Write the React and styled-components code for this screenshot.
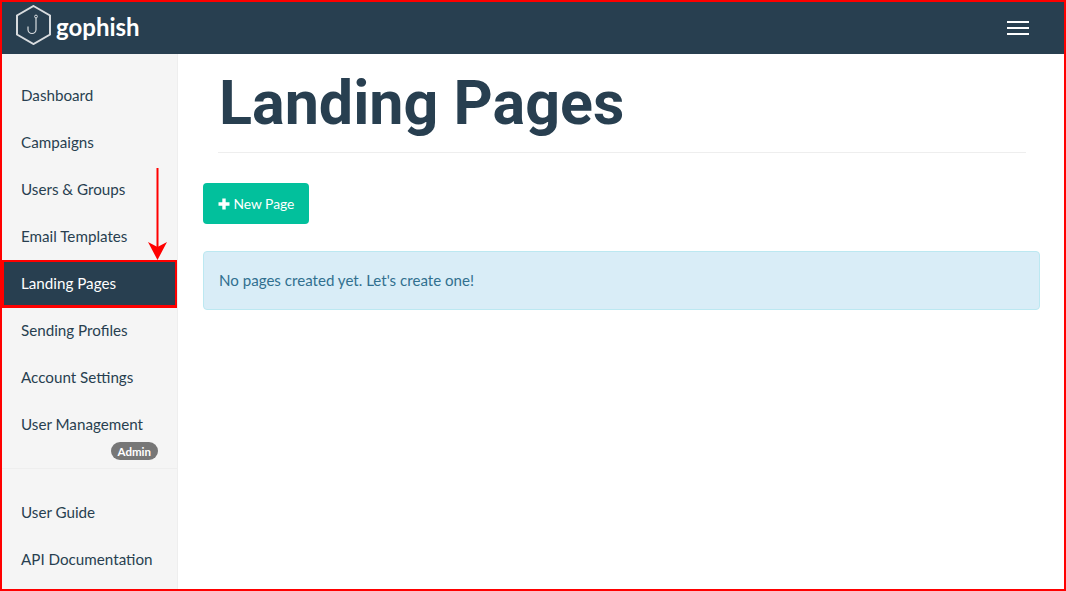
import React from "react";
import styled, { createGlobalStyle } from "styled-components";

const Global = createGlobalStyle`
  html, body { margin: 0; padding: 0; background: #fff; }
  * { box-sizing: border-box; }
  body { font-family: "Lato", "Noto Sans", sans-serif; }
`;

const Frame = styled.div`
  position: relative;
  width: 1066px;
  height: 591px;
  border: 2px solid #ff0000;
  display: flex;
  flex-direction: column;
  overflow: hidden;
  background: #fff;
`;

const TopBar = styled.header`
  flex: 0 0 52px;
  background: #283f50;
  display: flex;
  align-items: center;
  justify-content: space-between;
  padding: 0 35px 0 13px;
`;

const Brand = styled.div`
  display: flex;
  align-items: center;
  gap: 4px;
  margin-top: -6px;
`;

const BrandName = styled.span`
  color: #fff;
  font: 700 24px "Lato", sans-serif;
  margin-top: 3px;
`;

const Burger = styled.div`
  width: 22px;
  display: flex;
  flex-direction: column;
  gap: 4px;
  margin-top: -1px;
`;

const BurgerLine = styled.span`
  display: block;
  height: 2px;
  background: #fff;
`;

const Body = styled.div`
  flex: 1;
  display: flex;
  min-height: 0;
`;

const Sidebar = styled.nav`
  flex: 0 0 176px;
  background: #f5f5f5;
  border-right: 1px solid #eee;
  padding-top: 18px;
`;

const NavItem = styled.a`
  position: relative;
  display: flex;
  align-items: center;
  height: 47px;
  padding: 0 0 2px 19px;
  font-size: 15.2px;
  color: ${p => (p.$active ? "#fff" : "#283f50")};
  background: ${p => (p.$active ? "#283f50" : "transparent")};
  ${p => p.$active && "box-shadow: inset 0 0 0 2px #ff0000, 0 1px 0 #ff0000;"}
`;

const Badge = styled.span`
  position: absolute;
  right: 19px;
  top: 41px;
  height: 18px;
  padding: 0 7px;
  display: flex;
  align-items: center;
  border-radius: 9px;
  background: #777;
  color: #fff;
  font-size: 11.5px;
  font-weight: 700;
`;

const SideDivider = styled.hr`
  border: 0;
  border-top: 1px solid #eee;
  margin: 20px 0 20px;
`;

const Main = styled.main`
  flex: 1;
  padding: 0 24px 0 25px;
`;

const PageHeader = styled.div`
  margin: 0 14px 30px 15px;
  height: 99px;
  border-bottom: 1px solid #eee;
`;

const Title = styled.h1`
  margin: 0 0 0 1px;
  color: #283f50;
  font: 700 61px/98px "Roboto", sans-serif;
`;

const NewButton = styled.button`
  display: flex;
  align-items: center;
  gap: 3.5px;
  width: 106px;
  height: 41px;
  padding: 0 0 0 15px;
  border: 0;
  border-radius: 4px;
  background: #02c09c;
  color: #fff;
  font-family: inherit;
  font-size: 13.8px;
`;

const Info = styled.div`
  margin-top: 27px;
  height: 59px;
  display: flex;
  align-items: center;
  padding: 0 0 2px 15px;
  border: 1px solid #bce8f1;
  border-radius: 4px;
  background: #d9edf7;
  color: #31708f;
  font-size: 15.1px;
`;

const ArrowOverlay = styled.svg`
  position: absolute;
  left: 144px;
  top: 164px;
`;

const items = ["Dashboard", "Campaigns", "Users & Groups", "Email Templates", "Landing Pages", "Sending Profiles", "Account Settings"];

export default function App() {
  return (
    <Frame>
      <Global />
      <TopBar>
        <Brand>
          <svg width="37" height="40" viewBox="0 0 37 40" fill="none">
            <path d="M18.5 1 L35 10.5 V29.5 L18.5 39 L2 29.5 V10.5 Z" stroke="#d8dcdf" strokeWidth="2" />
            <circle cx="21" cy="11.5" r="1.4" stroke="#d8dcdf" strokeWidth="1" />
            <path d="M21 13 V24.5 a4 4 0 0 1 -8 0 V21.5" stroke="#d8dcdf" strokeWidth="1.2" />
          </svg>
          <BrandName>gophish</BrandName>
        </Brand>
        <Burger>
          <BurgerLine />
          <BurgerLine />
          <BurgerLine />
        </Burger>
      </TopBar>
      <Body>
        <Sidebar>
          {items.map(t => (
            <NavItem key={t} $active={t === "Landing Pages"}>{t}</NavItem>
          ))}
          <NavItem>
            User Management
            <Badge>Admin</Badge>
          </NavItem>
          <SideDivider />
          <NavItem>User Guide</NavItem>
          <NavItem>API Documentation</NavItem>
        </Sidebar>
        <Main>
          <PageHeader>
            <Title>Landing Pages</Title>
          </PageHeader>
          <NewButton>
            <svg width="12" height="12" viewBox="0 0 12 12"><path d="M4.3 0.5h3.4v3.8h3.8v3.4H7.7v3.8H4.3V7.7H0.5V4.3h3.8z" fill="#fff" /></svg>
            New Page
          </NewButton>
          <Info>No pages created yet. Let's create one!</Info>
        </Main>
      </Body>
      <ArrowOverlay width="24" height="96" viewBox="0 0 24 96">
        <path d="M11.5 2 V84" stroke="#ff0000" strokeWidth="2" />
        <path d="M2 76 L11.5 81 L21 76 L11.5 94 Z" fill="#ff0000" />
      </ArrowOverlay>
    </Frame>
  );
}
